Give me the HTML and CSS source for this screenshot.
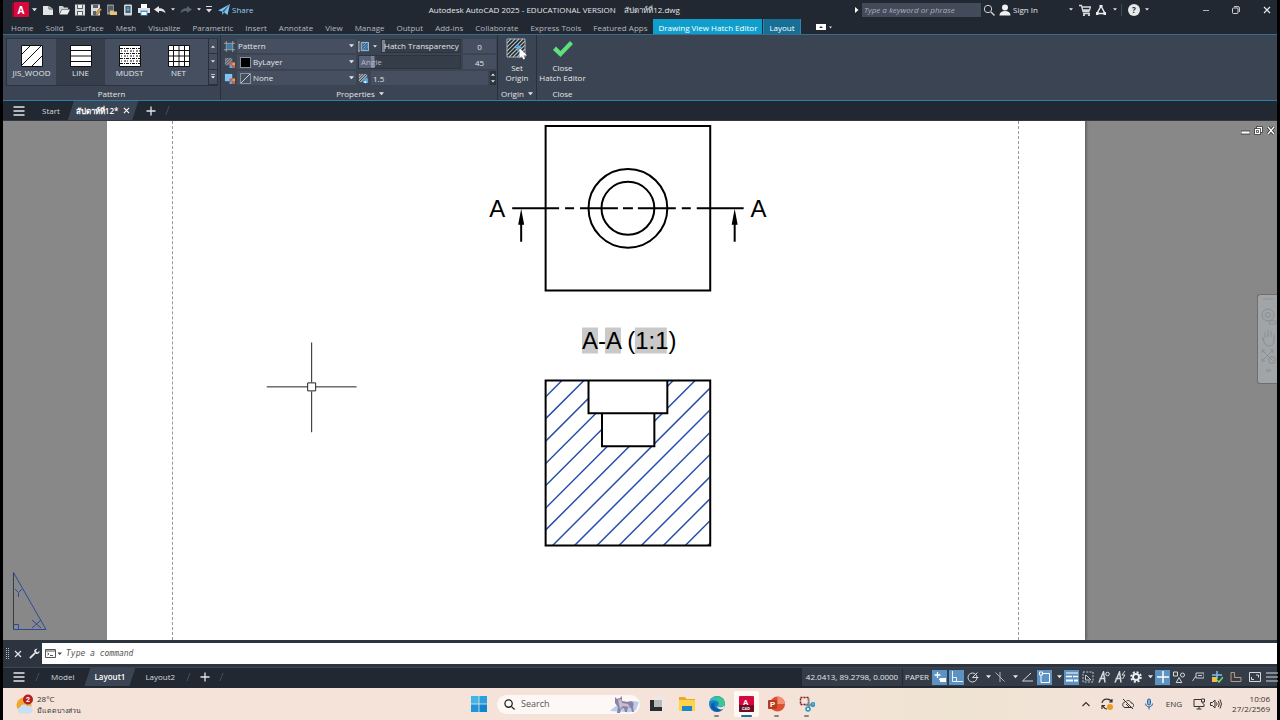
FILE: index.html
```html
<!DOCTYPE html>
<html lang="en">
<head>
<meta charset="utf-8">
<title>Autodesk AutoCAD 2025</title>
<link rel="stylesheet" href="styles.css">
</head>
<body>
<svg width="0" height="0" class="defs" aria-hidden="true">
  <symbol id="caret" viewBox="0 0 6 4"><path d="M0 0h6L3 3.6z" fill="currentColor"/></symbol>
  <symbol id="caret-up" viewBox="0 0 6 4"><path d="M0 4h6L3 .4z" fill="currentColor"/></symbol>
  <symbol id="burger" viewBox="0 0 12 12"><path d="M.5 2h11M.5 6h11M.5 10h11" stroke="currentColor" stroke-width="1.5"/></symbol>
  <symbol id="plus" viewBox="0 0 10 10"><path d="M5 .5v9M.5 5h9" stroke="currentColor" stroke-width="1.3"/></symbol>
  <symbol id="cross" viewBox="0 0 8 8"><path d="M1 1l6 6M7 1L1 7" stroke="currentColor" stroke-width="1.2"/></symbol>
</svg>
<div class="app">
  <header class="titlebar">
    <div class="quick">
      <button class="logo" aria-label="Application menu"><svg width="17" height="16" viewBox="0 0 17 16"><path d="M0 1h3v14H0z" fill="#8e0b30"/><rect x="2" width="15" height="15" rx="1" fill="#d5083f"/></svg><span>A</span></button>
      <button class="drop"><svg class="c5"><use href="#caret"/></svg></button>
      <button><svg viewBox="0 0 12 12"><path d="M1 2h6l4 3v6H1z" fill="#e2e4e6"/><path d="M7 2v3h4" fill="none" stroke="#59616b"/></svg></button>
      <button><svg viewBox="0 0 12 12"><path d="M1 10V2h4l1 1.5h4V5H4z" fill="#c9ccd0"/><path d="M1.500 10.500L4 5.500h8l-2.500 5z" fill="#eceef0"/></svg></button>
      <button><svg viewBox="0 0 12 12"><path d="M1 .5h10v11H1z" fill="#d9dbdd"/><path d="M3 1h6v4H3zM3 7h6v4.500H3z" fill="#5a626c"/><path d="M4 1h4v3H4zM4 8h4v3H4z" fill="#eef0f1"/></svg></button>
      <button><svg viewBox="0 0 12 12"><path d="M1 .5h9v11H1z" fill="#d9dbdd"/><path d="M3 1h5v3H3zM3 7h3v4.500H3z" fill="#5a626c"/><path d="M5.500 9.500L10 4l1.800 1.500L7.500 10.500l-2.300.6z" fill="#e5a23a" stroke="#343a44" stroke-width=".5"/></svg></button>
      <button><svg viewBox="0 0 12 12"><path d="M1 .5h7v10H1z" fill="#8a8e93"/><path d="M2 2h5v6H2z" fill="#565d66"/><path d="M4 11V6.500h3l1 1h3V11z" fill="#e9c57b"/></svg></button>
      <button><svg viewBox="0 0 12 12"><rect x="2" y=".5" width="8" height="11" rx="1" fill="#d4d8db"/><path d="M3.500 2h5v7h-5z" fill="#476379"/><path d="M6 3v3M4.500 5L6 6.700 7.500 5" stroke="#63b7f0" fill="none"/></svg></button>
      <button><svg viewBox="0 0 12 12"><path d="M3 0h6v4H3z" fill="#fff"/><path d="M0 4h12v5H0z" fill="#dfe1e3"/><path d="M2.500 6.500h7v5h-7z" fill="#4a9bd6"/><path d="M3.500 8h5v3h-5z" fill="#fff"/></svg></button>
      <button><svg viewBox="0 0 12 12"><path d="M0 5.500L5 2v2.200c4 0 6 1.500 6.500 5C10 7.500 8 7 5 7v2z" fill="#e4e6e8"/></svg></button>
      <button class="drop"><svg class="c4"><use href="#caret"/></svg></button>
      <button class="dim"><svg viewBox="0 0 12 12"><path d="M12 5.500L7 2v2.200C3 4.200 1 5.700.5 9.200 2 7.500 4 7 7 7v2z" fill="#59616b"/></svg></button>
      <button class="drop"><svg class="c4"><use href="#caret"/></svg></button>
      <button class="drop"><svg width="6" height="7" viewBox="0 0 6 7"><path d="M0 .5h6" stroke="#ddd"/><path d="M0 3h6L3 6.500z" fill="#ddd"/></svg></button>
      <button class="share"><svg viewBox="0 0 12 12"><path d="M0 6.500L12 0 9.500 11 6 8.200 4.500 11 4 7.500z" fill="#7cc3ee"/><path d="M4 7.500L12 0 6 8.200" fill="#2f6186"/></svg>Share</button>
    </div>
    <h1>Autodesk AutoCAD 2025 - EDUCATIONAL VERSION &nbsp; &nbsp;สัปดาห์ที่12.dwg</h1>
    <div class="account">
      <svg width="4" height="6" viewBox="0 0 4 6"><path d="M0 0l3.500 3L0 6z" fill="#fff"/></svg>
      <input type="text" aria-label="Search help" placeholder="Type a keyword or phrase">
      <button class="w16"><svg viewBox="0 0 12 12" fill="none" stroke="#cfd3d7"><circle cx="5" cy="5" r="3.700"/><path d="M8 8l3.500 3.500" stroke-width="1.400"/></svg></button>
      <button class="signin"><svg viewBox="0 0 12 12" fill="#f0f1f2"><circle cx="6" cy="3.500" r="3"/><path d="M.5 11.500c0-3 2-4.500 5.500-4.500s5.500 1.500 5.500 4.500z"/></svg>Sign In</button>
      <button class="drop"><svg class="c4"><use href="#caret"/></svg></button>
      <button class="w16"><svg width="10" height="10" viewBox="0 0 12 12"><path d="M0 1.500h2.500l1.500 6h6.500M3 3h8.500L10.500 6H3.800M4 9.500h7" fill="none" stroke="#d7dadd" stroke-width="1.300"/><circle cx="5" cy="11" r="1.100" fill="#d7dadd"/><circle cx="10" cy="11" r="1.100" fill="#d7dadd"/></svg></button>
      <button class="w16"><svg viewBox="0 0 12 12" fill="none" stroke="#e8eaec"><path d="M6 2L2 9.500h8z" stroke-width="1.500"/><path d="M6 1v2M1 9.500h2.500M8.500 9.500H11" stroke-width="3"/></svg></button>
      <button class="drop"><svg class="c4"><use href="#caret"/></svg></button>
      <i class="rule"></i>
      <button class="help">?</button>
      <button class="drop"><svg class="c4"><use href="#caret"/></svg></button>
      <button class="win first" aria-label="Minimize"><svg width="8" height="8" viewBox="0 0 8 8"><path d="M1 4.500h6" stroke="#aeb3b8"/></svg></button>
      <button class="win" aria-label="Restore"><svg width="8" height="8" viewBox="0 0 8 8" fill="none" stroke="#d3d6d9"><rect x=".5" y="2" width="5.500" height="5.500" rx="1"/><path d="M2 .6h4q1.400 0 1.400 1.400v4"/></svg></button>
      <button class="win" aria-label="Close"><svg width="8" height="8"><use href="#cross"/></svg></button>
    </div>
  </header>

  <nav class="menu">
    <a href="#">Home</a><a href="#">Solid</a><a href="#">Surface</a><a href="#">Mesh</a><a href="#">Visualize</a><a href="#">Parametric</a><a href="#">Insert</a><a href="#">Annotate</a><a href="#">View</a><a href="#">Manage</a><a href="#">Output</a><a href="#">Add-ins</a><a href="#">Collaborate</a><a href="#">Express Tools</a><a href="#">Featured Apps</a><a href="#" class="ctx active">Drawing View Hatch Editor</a><a href="#" class="ctx">Layout</a>
    <button class="mini" aria-label="Minimize ribbon"><svg width="16" height="6" viewBox="0 0 16 6"><path d="M0 0h10v6H0z" fill="#fff"/><path d="M3 4l2-2 2 2z" fill="#333"/><path d="M13 2.500h3l-1.500 2z" fill="#ddd"/></svg></button>
  </nav>

  <section class="ribbon">
    <div class="panel">
      <div class="gallery">
        <button class="tile"><svg width="22" height="22" viewBox="0 0 22 22"><path d="M.5.5h21v21H.5z" fill="#fff" stroke="#111"/><path d="M1 9L9 1M1 20L20 1M11 21L21 11" stroke="#111"/></svg>JIS_WOOD</button>
        <button class="tile sel"><svg width="22" height="22" viewBox="0 0 22 22"><path d="M.5.5h21v21H.5z" fill="#fff" stroke="#111"/><path d="M1 5.500h20M1 11h20M1 16.500h20" stroke="#111" stroke-width="1.200"/></svg>LINE</button>
        <button class="tile"><svg width="22" height="22" viewBox="0 0 22 22"><path d="M.5.5h21v21H.5z" fill="#fff" stroke="#111"/><path d="M1 3.500h20M1 8.500h20M1 13.500h20M1 18.500h20" stroke="#111" stroke-dasharray="3 1 1 1"/><path d="M2 6h19M2 11h19M2 16h19" stroke="#111" stroke-dasharray="1 2 2 1"/></svg>MUDST</button>
        <button class="tile last"><svg width="22" height="22" viewBox="0 0 22 22"><path d="M.5.5h21v21H.5z" fill="#fff" stroke="#111"/><path d="M1 5.500h20M1 11h20M1 16.500h20M5.500 1v20M11 1v20M16.500 1v20" stroke="#111"/></svg>NET</button>
        <div class="scroll"><button aria-label="Scroll up"><svg class="c4"><use href="#caret-up"/></svg></button><button aria-label="Scroll down"><svg class="c4"><use href="#caret"/></svg></button><button aria-label="Expand"><svg width="4" height="5" viewBox="0 0 6 7"><path d="M0 .5h6" stroke="#fff"/><path d="M0 3h6L3 6.500z" fill="#fff"/></svg></button></div>
      </div>
      <h2>Pattern</h2>
    </div>
    <div class="panel props">
      <div class="fields">
        <div class="row"><svg viewBox="0 0 12 12"><path d="M3 3h6v6H3z" fill="#3d7ca8"/><path d="M2.500 0v12M9.500 0v12M0 2.500h12M0 9.500h12" stroke="#c6cdd3" stroke-width=".7"/></svg><span class="pick"><select aria-label="Hatch type"><option>Pattern</option></select><svg class="c5"><use href="#caret"/></svg></span></div>
        <div class="row"><svg viewBox="0 0 12 12"><path d="M1 1h8v8H1z" fill="#8b9199"/><path d="M1 3l2-2M1 6l5-5M1 9l8-8M4 9l5-5" stroke="#2b313a" stroke-width=".7"/><path d="M6 6h3v3H6zM9 9h3v3H9z" fill="#e2574c"/><path d="M9 6h3v3H9z" fill="#efa23d"/><path d="M6 9h3v3H6z" fill="#58aee8"/></svg><span class="pick"><i class="swatch"></i><select aria-label="Hatch color"><option>ByLayer</option></select><svg class="c5"><use href="#caret"/></svg></span></div>
        <div class="row"><svg viewBox="0 0 12 12"><path d="M1 1h8v8H1z" fill="#7cc5f5"/><path d="M6 6h3v3H6zM9 9h3v3H9z" fill="#e2574c"/><path d="M9 6h3v3H9z" fill="#efa23d"/><path d="M6 9h3v3H6z" fill="#58aee8"/></svg><span class="pick"><i class="swatch none"><svg width="9" height="9" viewBox="0 0 9 9"><path d="M0 9L9 0" stroke="#cfd3d7"/></svg></i><select aria-label="Background color"><option>None</option></select><svg class="c5"><use href="#caret"/></svg></span></div>
      </div>
      <div class="fields second">
        <div class="row"><svg viewBox="0 0 12 12"><path d="M1 1v10M0 1h2M0 11h2" stroke="#ccd" fill="none"/><path d="M3.500 1.500h8v9h-8z" fill="#3c6c93" stroke="#a9c6dd"/><path d="M4 4l2-2M4 7l5-5M4 10l7-7M7 10l4-4" stroke="#9ed0f3" stroke-dasharray="1 1"/></svg><svg class="c4 mid"><use href="#caret"/></svg><label class="slide"><input type="range" min="0" max="90" value="0"><span>Hatch Transparency</span></label><input class="num" type="text" aria-label="Transparency value" value="0"></div>
        <div class="row"><label class="slide angle"><input type="range" min="0" max="360" value="45"><span>Angle</span></label><input class="num" type="text" aria-label="Angle value" value="45"></div>
        <div class="row"><svg viewBox="0 0 12 12"><path d="M1 1h9v9H1z" fill="#aab0b7"/><path d="M1 4l3-3M1 7l6-6M1 10l9-9M4 10l6-6" stroke="#2b313a"/><path d="M6 6h5v5H6z" fill="#4da6e3"/><path d="M7 9h2v2H7z" fill="#fff"/></svg><input class="scale" type="text" aria-label="Hatch scale" value="1.5"><span class="spin"><button aria-label="Increase"><svg class="c4"><use href="#caret-up"/></svg></button><button aria-label="Decrease"><svg class="c4"><use href="#caret"/></svg></button></span></div>
      </div>
      <h2>Properties <svg class="c5"><use href="#caret"/></svg></h2>
    </div>
    <div class="panel origin">
      <button class="big"><svg width="22" height="22" viewBox="0 0 22 22"><path d="M1 1h18v18H1z" fill="#20262e" stroke="#a9afb6"/><path d="M1 5l4-4M1 9l8-8M1 13L13 1M1 17L17 1M3 19L19 3M7 19L19 7M11 19l8-8M15 19l4-4" stroke="#b6bbc1" stroke-width="1.100"/><path d="M12 6v7M8.500 9.500h7" stroke="#58b5f0" stroke-width="1.400"/><path d="M13.500 10v10l2.300-2 1.500 3.500 1.700-.8-1.500-3.300H21z" fill="#fff"/></svg><span>Set<br>Origin</span></button>
      <h2>Origin <svg class="c5"><use href="#caret"/></svg></h2>
    </div>
    <div class="panel close">
      <button class="big"><svg width="22" height="22" viewBox="0 0 22 22"><path d="M1 12l3-3.500 4.500 4.500L18 3l3 3L8.500 19z" fill="#5ee07c"/></svg><span>Close<br>Hatch Editor</span></button>
      <h2>Close</h2>
    </div>
  </section>

  <div class="tabs files">
    <button class="ham" aria-label="File tab menu"><svg width="12" height="12"><use href="#burger"/></svg></button>
    <button class="tab">Start</button>
    <div class="tab on"><span>สัปดาห์ที่12*</span><button aria-label="Close tab"><svg width="7" height="7"><use href="#cross"/></svg></button></div>
    <button class="add" aria-label="New drawing"><svg width="10" height="10"><use href="#plus"/></svg></button><i class="slash"></i>
  </div>

  <main class="canvas">
    <div class="ucs"><svg width="36" height="60" viewBox="0 0 36 60" fill="none" stroke="#2c489e"><path d="M1.500 1.500v57" stroke="#333b46"/><path d="M1.500 1.500L34 58.500H1.500M1.500 53.500h5v5M3 18l3.500 3.500L10 18M6.500 21.500V26M20 49l9 8M29 49l-9 8"/></svg></div>
    <div class="paper">
      <svg class="sheet" viewBox="172 121 847 519" preserveAspectRatio="xMidYMin meet">
        <clipPath id="section"><path d="M546 381h42v33h14v33h52v-33h14v-33h42v165H546z"/></clipPath>
        <g fill="none" stroke="#000" stroke-width="2">
          <path d="M545.500 126h165v165h-165z"/>
          <circle cx="628" cy="208.500" r="39.500"/><circle cx="628" cy="208.500" r="26.500"/>
          <path d="M512 208.500h47M565 208.500h9M580 208.500h38M623 208.500h10M638 208.500h38M682 208.500h9M697 208.500h47M521 224v18M735 224v18"/>
        </g>
        <path d="M521 209l3 16h-6zM735 209l3 16h-6z"/>
        <g clip-path="url(#section)" stroke="#2850ac" stroke-width="1.500"><path d="M543 400L571 372M543 422L593 372M543 444.500L615 372.500M543 467L637 373M543 489L659 373M543 511.500L681 373.500M543 533.500L703 373.500M543 556L726 373M543 578L748 373M543 600.500L770 373.500M543 622.500L792 373.500M543 645L814 374M543 667L836 374M543 689L858 374M543 711.500L880 374.500"/></g>
        <path d="M545.500 381h165v165.500h-165zM588.500 381v33h79v-33M602 414v33h52.500v-33" fill="none" stroke="#000" stroke-width="2"/>
        <path d="M582 328h16v26h-16zM605 328h16v26h-16zM635 328h32v26h-32z" fill="#c9c9c9"/>
        <g class="note"><text x="489" y="217">A</text><text x="751" y="217">A</text><text x="582" y="350">A-A (1:1)</text></g>
        <path d="M311 343v40M311 392v41M266 387.500h41M315 387.500h41M307 383.500h8v8h-8z" fill="none" stroke="#222"/>
      </svg>
    </div>
    <div class="mdi"><button aria-label="Minimize drawing"><svg width="9" height="9" viewBox="0 0 9 9"><path d="M0 5h9v3H0z" fill="#fff" stroke="#333" stroke-width=".8"/></svg></button><button aria-label="Restore drawing"><svg width="9" height="9" viewBox="0 0 9 9" fill="#fff" stroke="#333" stroke-width=".8"><path d="M2.500.5h6v6h-6z"/><path d="M.5 2.500h6v6h-6z"/><path d="M2.500 4.500h2v2h-2z"/></svg></button><button aria-label="Close drawing"><svg width="9" height="9" viewBox="0 0 9 9"><path d="M1 1l6 7M7 1L1 8" stroke="#333" stroke-width="3"/><path d="M1 1l6 7M7 1L1 8" stroke="#fff" stroke-width="1.400"/></svg></button></div>
    <div class="navbar"><svg width="19" height="88" viewBox="0 0 19 88" fill="none" stroke="#8b8e90"><path d="M5 4h10"/><circle cx="10" cy="20" r="6"/><circle cx="10" cy="20" r="2.500"/><path d="M11 26h7v3h-7zM6 46l-2-4M7 43v-6M10 42v-7M13 42v-6M16 44v-5M5 43c1 6 3 8 6 8 4 0 5-3 5-8M4 55l11 11M15 55L4 66M4 58v-3h3M12 55h3v3M4 63v3h3"/><circle cx="14" cy="65" r="3.500"/><path d="M8 75h5l-2.500 2z"/></svg></div>
  </main>

  <div class="command">
    <i class="grip"></i>
    <button aria-label="Close command line"><svg width="8" height="8"><use href="#cross"/></svg></button>
    <button aria-label="Customize"><svg width="11" height="11" viewBox="0 0 12 12"><path d="M1 11l5.500-5.500" stroke="#e6e8ea" stroke-width="2"/><path d="M11.500 3L9.300 5 7.300 3.200 9.200.8C6.500.2 5 2.500 5.800 4.600L7.300 6.200c2.400.8 4.600-.7 4.200-3.200z" fill="#e6e8ea"/></svg></button>
    <label class="prompt"><svg width="17" height="10" viewBox="0 0 17 10"><path d="M.5.500h10v8H.5zM.5 2h10M2.500 4l1.500 1-1.500 1M5 6.500h3" fill="none" stroke="#555"/><path d="M12.500 3.500h4.500L14.700 6z" fill="#444"/></svg><input type="text" aria-label="Command" placeholder="Type a command"></label>
  </div>

  <footer class="tabs status">
    <button class="ham" aria-label="Layout menu"><svg width="12" height="12"><use href="#burger"/></svg></button>
    <i class="slash"></i>
    <button class="tab">Model</button><button class="tab on">Layout1</button><button class="tab">Layout2</button><i class="slash"></i>
    <button class="add" aria-label="New layout"><svg width="10" height="10"><use href="#plus"/></svg></button><i class="slash"></i>
    <div class="tools">
      <button class="coords">42.0413, 89.2798, 0.0000</button>
      <button class="space">PAPER</button>
      <button class="t on"><svg viewBox="0 0 12 12"><path d="M3.500 1v6M.5 4h6M5 8.500h7" stroke="#fff" stroke-width="1.300"/><path d="M6 7h6v4H6z" fill="#fff"/></svg></button>
      <button class="t on"><svg viewBox="0 0 12 12" fill="none" stroke="#e9f3fa"><path d="M1.500 0v10.500H12M1.500 6.500h4v4"/></svg></button>
      <button class="t"><svg viewBox="0 0 12 12" fill="none" stroke="#d6d9dc"><circle cx="5.500" cy="6.500" r="4.500"/><path d="M5.500 6.500h6M5.500 6.500l5-5"/></svg></button>
      <button class="d"><svg class="c5"><use href="#caret"/></svg></button>
      <button class="t"><svg viewBox="0 0 12 12" fill="none" stroke="#aeb4ba"><path d="M6 1v10M1.500 1.500l9 9"/></svg></button>
      <button class="d"><svg class="c5"><use href="#caret"/></svg></button>
      <button class="t"><svg viewBox="0 0 12 12" fill="none" stroke="#d6d9dc"><path d="M10 2L1.500 10H12"/></svg></button>
      <button class="t on"><svg viewBox="0 0 12 12" fill="none" stroke="#fff"><path d="M2 2.500h8.500v9H2z"/><path d="M.5 1h3v3h-3z" fill="#5d93c2"/></svg></button>
      <button class="d n"><svg class="c5"><use href="#caret"/></svg></button>
      <button class="t on"><svg viewBox="0 0 12 12" stroke="#fff"><path d="M0 2h12" /><path d="M0 5.500h6M7 5.500h5" stroke-width="1.500"/><path d="M0 9.500h7M8 9.500h4" stroke-width="2.200"/></svg></button>
      <button class="t w"><svg viewBox="0 0 12 12" fill="none" stroke="#c5cace"><path d="M1 1h10v10H1z" stroke-dasharray="2 1.300"/><path d="M3.500 4v5h5M4 4l5 5"/></svg></button>
      <button class="t w"><svg viewBox="0 0 12 12" fill="none" stroke="#d6d9dc"><path d="M1 11.500L5.500 1 7 11.500M1.500 8l6-1" stroke-width="1.500"/><circle cx="9.500" cy="3" r="1.800"/></svg></button>
      <button class="t w"><svg viewBox="0 0 12 12" fill="none" stroke="#d6d9dc"><path d="M1 11.500L5.500 1 7 11.500M1.500 8l6-1" stroke-width="1.500"/><path d="M11 0L8 4h3L8.500 8"/></svg></button>
      <button class="t w"><svg viewBox="0 0 12 12" fill="none" stroke="#eceef0"><circle cx="6" cy="6" r="3" stroke-width="2"/><circle cx="6" cy="6" r="4.800" stroke-width="2" stroke-dasharray="2 1.770"/></svg></button>
      <button class="d"><svg class="c5"><use href="#caret"/></svg></button>
      <button class="t on"><svg viewBox="0 0 12 12"><path d="M6 0v12M0 6h12" stroke="#fff" stroke-width="1.500"/></svg></button>
      <button class="t x"><svg viewBox="0 0 12 12" fill="none" stroke="#d6d9dc"><path d="M.5 1h4v4h-4zM6 6.500l2.800 5H3.200z"/><circle cx="9.500" cy="4" r="2"/></svg></button>
      <button class="t x"><svg viewBox="0 0 12 12" fill="none" stroke="#c5cace"><path d="M4 2h8v5H4zM6 4.500h4M4 5L.5 10"/></svg></button>
      <button class="t x"><svg viewBox="0 0 12 12"><path d="M6 0v8M1 4h10" stroke="#79bdf0" stroke-width="1.500"/><path d="M1 6h5v5H1z" fill="#f0bd45"/><path d="M6 9l2 2 4-5" fill="none" stroke="#5ee07c" stroke-width="1.500"/></svg></button>
      <button class="t x"><svg viewBox="0 0 12 12"><path d="M1 1.500h3.500v5H11v4H1z" fill="none" stroke="#b89a7c"/></svg></button>
      <button class="t x"><svg viewBox="0 0 12 12" fill="none" stroke="#d6d9dc"><path d="M.5 1.500h11v9H.5z"/><path d="M7 4h2.500v2.500M5 8.500H2.500V6"/></svg></button>
      <button class="t last"><svg viewBox="0 0 12 12"><path d="M0 2h12M0 6h12M0 10h12" stroke="#d6d9dc"/></svg></button>
    </div>
  </footer>

  <div class="taskbar">
    <button class="weather"><svg width="18" height="21" viewBox="0 0 18 21"><circle cx="8" cy="11" r="7.500" fill="#f3a52e"/><path d="M4 19.500a3.500 3.500 0 010-6.500 4 4 0 017-1 4 4 0 013 7.500z" fill="#c9dff6"/><circle cx="12" cy="5.500" r="5" fill="#b3201f"/><text x="10" y="8">2</text></svg><span>28°C<br><small>มีแดดบางส่วน</small></span></button>
    <div class="apps">
      <button class="start" aria-label="Start"><svg width="16" height="16" viewBox="0 0 16 16"><path d="M0 0h7.600v7.600H0z" fill="#42b5e8"/><path d="M8.400 0H16v7.600H8.400z" fill="#2aa0e0"/><path d="M0 8.400h7.600V16H0z" fill="#1e96dc"/><path d="M8.400 8.400H16V16H8.400z" fill="#0f84cf"/></svg></button>
      <label class="find"><svg width="11" height="11" viewBox="0 0 12 12" fill="none" stroke="#222" stroke-width="1.400"><circle cx="5" cy="5" r="4"/><path d="M8 8l3.500 3.500"/></svg><input type="text" aria-label="Search" placeholder="Search"><svg width="30" height="18" viewBox="0 0 30 18"><path d="M0 16C8 8 20 4 29 7l-3 8q-4 3-10 2z" fill="#b9cdf1"/><path d="M5 2l2 2 3-1 2-2v5l6 1c4-2 7 1 5 5l1 5h-2l-1-4-3-1-1 5h-2l-1-4-3 1-1 4H7l1-6-3-4z" fill="#8a829f"/><path d="M8 5l3-1 1 4 6 1 2 3-7-1-3 3z" fill="#c5bdd2"/></svg></label>
      <button><svg width="18" height="16" viewBox="0 0 18 16"><path d="M6 1h11v10H6z" fill="#e9e9e9"/><path d="M2 4h12v11H2z" fill="#2a2b2e"/><path d="M6 4h8v7H6z" fill="#b9b9ba"/></svg></button>
      <button><svg width="18" height="16" viewBox="0 0 18 16"><path d="M1 1h6l1.500 2H17v12H1z" fill="#e7ac22"/><path d="M1 4h16v11H1z" fill="#fcd44c"/><path d="M4 10h10v5H4z" fill="#1c86ce"/></svg></button>
      <button class="run"><svg width="16" height="16" viewBox="0 0 16 16"><circle cx="8" cy="8" r="8" fill="#157fc8"/><path d="M.3 6C2-1 14-2 16 7c0 4-5 4.500-7 3 1-2 1-4-1-5S2 4 .3 6z" fill="#39c98c"/><path d="M.5 5.500C3 0 8 1 10 3 6 2 2 4 .5 5.500z" fill="#2fb7dd"/><path d="M6 7c-2 4 2 8 8 6-5 5-12 2-12-3 0-2 2-4 4-3z" fill="#0d59a5"/><path d="M8 10c2 1.800 6 1.500 8-1l-1.500 4c-3 1-6 0-6.500-3z" fill="#f4e5da"/></svg></button>
      <button class="run current"><svg width="15" height="16" viewBox="0 0 15 16"><rect width="15" height="16" rx="1" fill="#d5083f"/><path d="M0 9h15v6q0 1-1 1H1q-1 0-1-1z" fill="#6f0c25"/><text x="4" y="9">A</text><text class="cad" x="3" y="14">CAD</text></svg></button>
      <button class="run"><svg width="17" height="16" viewBox="0 0 17 16"><circle cx="9.500" cy="8" r="7.500" fill="#d95232"/><path d="M9.500.5A7.500 7.500 0 0117 8H9.500z" fill="#f08f72"/><rect y="4" width="9" height="9" rx="1" fill="#b93a1f"/><text x="2" y="11">P</text></svg></button>
      <button class="run"><svg width="16" height="16" viewBox="0 0 16 16" fill="none"><path d="M1.500 1.500h8v7h-8z" stroke="#7c1c20" stroke-width="1.500" stroke-dasharray="2 1"/><path d="M9.500 2l.5 10M6 9h9" stroke="#7d8790" stroke-width="1.400"/><circle cx="9" cy="13" r="2" stroke="#2499c8" stroke-width="1.500"/><circle cx="14" cy="8.500" r="1.800" stroke="#2499c8" stroke-width="1.500"/></svg></button>
    </div>
    <div class="tray">
      <button><svg viewBox="0 0 12 12" fill="none" stroke="#333"><path d="M2.500 8L6 4.500 9.500 8" stroke-width="1.200"/></svg></button>
      <button><svg viewBox="0 0 12 12" fill="none" stroke="#333"><path d="M1 5c1-5 8-5 10-1M11 1v3H8M1 11V7.500h3M2 8c1 2 2 3 4 3" stroke-width="1.200"/><circle cx="9" cy="9" r="3" fill="#ee9a22" stroke="none"/></svg></button>
      <button><svg viewBox="0 0 12 12" fill="none" stroke="#333"><path d="M3 4C0 4 0 9.500 3 9.500h6M4.500 3c3-1.500 4.500 1 4.500 2 3 0 3.500 3 1.500 4.200M1 1l10 10M4 6l3 3"/></svg></button>
      <button><svg viewBox="0 0 12 12" fill="none" stroke="#27639d"><rect x="4.500" y="1" width="3" height="6" rx="1.500" fill="#79b2e2"/><path d="M2.500 5.500c0 4.500 7 4.500 7 0M6 9v2.500"/></svg></button>
      <span class="lang">ENG</span>
      <button class="tight"><svg viewBox="0 0 12 12" fill="none" stroke="#333"><path d="M8 1.500H1v7h10V6M3.500 11h5M6 8.500V11M8.500 1h3v3h-3zM10 4v2"/></svg></button>
      <button class="tight"><svg viewBox="0 0 12 12" fill="none" stroke="#333"><path d="M.5 4.500h2L5 2v8L2.500 7.500h-2zM6.500 4.500q1 1.500 0 3M8.300 3q2 3 0 6M10 1.500q3 4.500 0 9"/></svg></button>
      <time>10:06<br>27/2/2569</time>
    </div>
  </div>
</div>
</body>
</html>
```

FILE: styles.css
```css
* { box-sizing: border-box; }
body { margin: 0; background: #000; }
.defs { position: absolute; }
.app { margin: 0 3px; min-height: 100vh; display: flex; flex-direction: column; background: #222831; color: #e4e6e9; font: 8px/12px "Open Sans", "Noto Sans", sans-serif; }
button, input, select { font: inherit; color: inherit; background: none; border: 0; padding: 0; margin: 0; min-width: 0; }
button { display: inline-flex; align-items: center; justify-content: center; white-space: nowrap; }
button svg { flex: none; }
a { color: inherit; text-decoration: none; }
input:focus { outline: none; }
.c5 { width: 5px; height: 4px; flex: none; }
.c4 { width: 4px; height: 3px; flex: none; }

.titlebar { display: flex; align-items: center; height: 19px; }
.quick, .account { display: flex; align-items: center; flex: none; }
.quick > button { width: 16px; }
.quick svg[viewBox="0 0 12 12"], .account svg[viewBox="0 0 12 12"] { width: 12px; height: 12px; }
.quick > .logo { width: 17px; margin-left: 9px; display: grid; }
.logo > * { grid-area: 1 / 1; }
.logo span { font-size: 10px; font-weight: 700; color: #fff; padding-left: 1px; }
.quick > .drop { width: 10px; }
.quick > .logo + .drop { width: 11px; }
.quick > .share { width: auto; gap: 2px; margin-left: 4px; color: #9fcdf0; }
h1 { flex: 1; margin: 0; font: inherit; text-align: center; white-space: nowrap; }
.account input { width: 119px; height: 14px; margin-left: 3px; padding-left: 2px; background: #434a5a; font-style: italic; }
.account input::placeholder { color: #a9aeb8; opacity: 1; }
.w16 { width: 16px; }
.signin { gap: 2px; width: 68px; justify-content: flex-start; padding-left: 2px; }
.account .drop { width: 12px; }
.rule { width: 1px; height: 12px; background: #414853; margin: 0 5px 0 0; }
.help { width: 12px; height: 12px; border-radius: 50%; background: #e6e8ea; color: #222831; font-weight: 700; margin: 0 1px; }
.win { width: 30px; }
.win.first { margin-left: 38px; }
.win:last-child { width: 26px; padding-left: 6px; }

.menu { display: flex; height: 16px; align-items: stretch; padding-left: 2px; color: #b4b9c0; white-space: nowrap; border-bottom: 1px solid #356d8e; }
.menu a { padding: 3px 6px 0; }
.menu .ctx { color: #fff; background: #176f96; padding: 3px 5px 0; border: 1px solid #2a87b3; border-width: 0 1px; }
.menu .active { background: #109fcd; margin-right: 1px; border: 0; }
.mini { margin-left: 15px; }

.ribbon { display: flex; height: 66px; background: #3b4452; border-bottom: 1px solid #2d7ea9; }
.panel { border-right: 1px solid #29303a; display: flex; flex-direction: column; padding: 3px 2px 0; }
.panel h2 { margin: auto 0 0; font: inherit; text-align: center; display: flex; align-items: center; justify-content: center; gap: 4px; }
.gallery { display: flex; height: 48px; margin-left: 1px; border: 1px solid #2c333e; background: #464f60; }
.tile { width: 49px; flex-direction: column; justify-content: flex-start; padding-top: 6px; }
.tile.last { width: 54px; padding-right: 5px; }
.tile.sel { background: #363e4b; }
.scroll { display: flex; flex-direction: column; }
.scroll button { flex: 1; width: 9px; border-left: 1px solid #29303a; border-bottom: 1px solid #29303a; }
.props { display: grid; grid-template: 1fr 12px / auto auto; column-gap: 2px; padding: 4px 1px 0 3px; }
.props h2 { grid-column: 1 / -1; }
.fields { display: grid; gap: 2px; align-content: start; }
.row { display: flex; align-items: center; gap: 2px; height: 14px; }
.row > svg:first-child { width: 11px; height: 11px; flex: none; }
.pick { display: flex; align-items: center; gap: 2px; width: 119px; height: 14px; padding: 0 2px 0 1px; background: #464f60; }
select { appearance: none; flex: 1; }
.swatch { width: 11px; height: 11px; margin-left: 2px; background: #000; border: 1px solid #8a929c; }
.swatch.none { background: none; display: grid; }
.second { width: 138px; grid-template-columns: 100%; }
.second .mid { margin: 0 2px; }
.slide { flex: 1; min-width: 0; display: grid; grid-template-columns: 100%; align-items: center; height: 14px; background: #353d49; border: 1px solid #2d343f; }
.slide > * { grid-area: 1 / 1; }
.slide span { padding-left: 2px; white-space: nowrap; }
.slide input { appearance: none; width: 100%; height: 12px; }
.slide input::-webkit-slider-thumb { appearance: none; width: 3px; height: 12px; background: #7c8492; }
.angle { background: linear-gradient(90deg, #58617a 16px, #353d49 16px); }
.angle span { color: #b4bac4; }
.num { width: 33px; height: 14px; text-align: center; background: #464f60; }
.scale { flex: 1; height: 14px; padding-left: 2px; background: #464f60; }
.spin { display: grid; width: 6px; height: 14px; background: #2c333e; }
.origin { width: 39px; padding: 3px 0 0; }
.panel.close { width: 51px; padding: 3px 0 0; border: 0; }
.big { flex-direction: column; gap: 3px; line-height: 10px; }

.tabs { display: flex; align-items: stretch; height: 20px; }
.files { height: 19px; }
.ham { width: 31px; }
.tab { padding: 0 8px; color: #d6d9dd; display: flex; align-items: center; }
.tab.on { background: #3b4452; color: #fff; clip-path: polygon(6px 0, 100% 0, calc(100% - 6px) 100%, 0 100%); font-weight: 600; padding: 0 8px; gap: 5px; white-space: nowrap; }
.add { width: 26px; }
.slash { width: 1px; background: #454d58; transform: skewX(-20deg); margin: 5px 3px; }

.canvas { flex: 1; position: relative; display: flex; background: #888; border-top: 1px solid #34373d; overflow: hidden; }
.paper { flex: 1; margin: 0 192px 0 104px; padding: 0 66px 0 65px; background: #fff; box-shadow: 2px 0 2px #666; }
.sheet { display: block; width: 100%; height: 519px; border: dashed #999; border-width: 0 1px; }
.note { font: 24px "Liberation Sans", Arial, sans-serif; }
.ucs { position: absolute; left: 9px; bottom: 9px; }
.ucs svg, .navbar svg { display: block; }
.mdi { position: absolute; right: 1px; top: 5px; display: flex; gap: 4px; }
.navbar { position: absolute; right: 0; top: 173px; border: 1px solid #6e6e6e; border-right: 0; border-radius: 3px 0 0 3px; background: #a2a5a7; }

.command { display: flex; height: 28px; padding: 3px 0; background: #2c343f; border-bottom: 1px solid #3d4650; }
.command > button { width: 16px; }
.grip { width: 5px; margin: 5px 0 5px 2px; background: conic-gradient(#b9bec4 25%, transparent 0) 0 0 / 2px 2px; }
.prompt { flex: 1; display: flex; align-items: center; gap: 4px; padding-left: 3px; background: #fff; color: #333; }
.prompt input { flex: 1; font: italic 8px "DejaVu Sans Mono", monospace; }
.prompt input::placeholder { color: #555; opacity: 1; }

.status { height: 20px; padding-bottom: 2px; }
.status .tab { padding: 0 10px; }
.tools { margin-left: auto; display: flex; align-items: center; background: #343c48; }
.coords { width: 101px; height: 17px; border-right: 1px solid #222831; }
.space { width: 28px; margin-right: 1px; }
.t { width: 14px; height: 15px; margin-right: 3px; }
.t svg { width: 12px; height: 12px; }
.t.on { background: #5d93c2; width: 15px; margin-right: 2px; }
.d { width: 10px; }
.t.w { margin-right: 2px; }
.t.x { margin-right: 5px; }
.t.last { width: 10px; margin: 0; }

.taskbar { display: grid; grid-template-columns: 1fr auto 1fr; height: 32px; align-items: center; background: linear-gradient(90deg, #f5e3d9 60%, #efe3d2 75%, #f3e2d9 88%); color: #333; }
.weather { justify-self: start; margin-left: 13px; gap: 3px; text-align: left; line-height: 11px; }
.weather text { font: 700 7px Roboto, sans-serif; fill: #fff; }
.weather small { font-size: 7px; }
.apps { display: flex; align-items: center; gap: 5px; padding-left: 9px; }
.apps button { width: 25px; height: 26px; position: relative; }
.apps .start { width: 18px; }
.apps text { font: 700 8px Roboto, sans-serif; fill: #fff; }
.apps .cad { font-size: 4px; }
.find { display: flex; align-items: center; gap: 6px; width: 143px; height: 19px; margin: 0 -1px 0 4px; padding-left: 7px; border-radius: 10px; background: #fdf8f5; overflow: hidden; }
.find input { flex: 1; font-size: 9px; }
.find input::placeholder { color: #555; opacity: 1; }
.run::after { content: ""; position: absolute; bottom: 0; left: 10px; width: 5px; height: 2px; border-radius: 1px; background: #8b8580; }
.apps .current { background: #fff8f3; border-radius: 2px; }
.current::after { left: 7px; width: 11px; background: #1a6ca8; }
.tray { justify-self: end; display: flex; align-items: center; padding-right: 7px; }
.tray button { width: 21px; }
.tray svg { width: 12px; height: 12px; }
.tray .tight { width: 17px; }
.lang { margin: 0 8px 0 6px; }
.tray time { text-align: right; line-height: 10px; margin-left: 8px; }
```
